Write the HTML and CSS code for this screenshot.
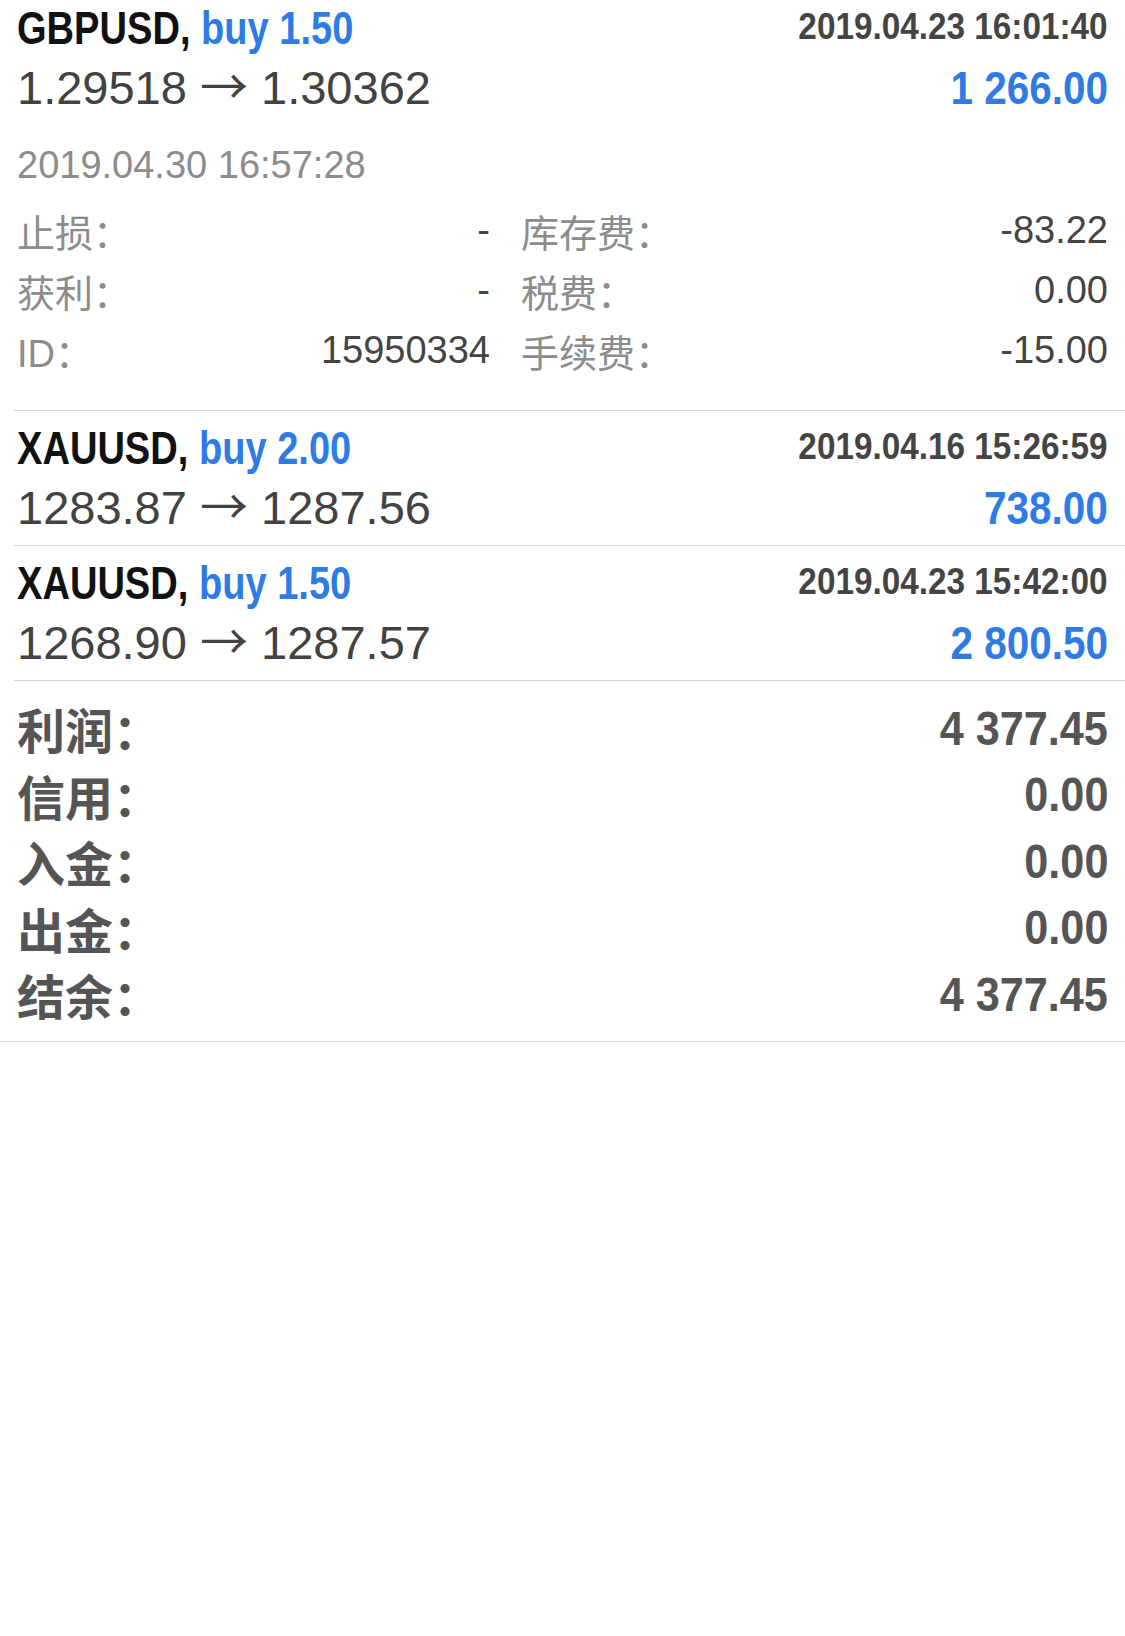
FILE: index.html
```html
<!DOCTYPE html>
<html lang="zh-CN">
<head>
    <meta charset="UTF-8">
    <meta name="viewport" content="width=device-width, initial-scale=1.0">
    <title>历史</title>
    <link rel="stylesheet" href="styles.css">
</head>
<body>

    <!-- 成交列表 -->
    <div class="deals">
        <!-- 展开的订单 -->
        <div class="deal deal-open">
            <div class="deal-line line-title">
                <span class="cond cond-left symbol">GBPUSD, <span class="type">buy 1.50</span></span>
                <span class="cond cond-right time">2019.04.23 16:01:40</span>
            </div>
            <div class="deal-line line-price">
                <span class="prices">1.29518 <span class="arrow">→</span> 1.30362</span>
                <span class="cond cond-right profit">1 266.00</span>
            </div>
            <div class="close-time">2019.04.30 16:57:28</div>
            <div class="detail-grid">
                <div class="detail-cell"><span class="detail-label">止损：</span><span class="detail-value">-</span></div>
                <div class="detail-cell"><span class="detail-label">库存费：</span><span class="detail-value">-83.22</span></div>
                <div class="detail-cell"><span class="detail-label">获利：</span><span class="detail-value">-</span></div>
                <div class="detail-cell"><span class="detail-label">税费：</span><span class="detail-value">0.00</span></div>
                <div class="detail-cell"><span class="detail-label">ID：</span><span class="detail-value">15950334</span></div>
                <div class="detail-cell"><span class="detail-label">手续费：</span><span class="detail-value">-15.00</span></div>
            </div>
        </div>

        <div class="deal">
            <div class="deal-line line-title">
                <span class="cond cond-left symbol">XAUUSD, <span class="type">buy 2.00</span></span>
                <span class="cond cond-right time">2019.04.16 15:26:59</span>
            </div>
            <div class="deal-line line-price">
                <span class="prices">1283.87 <span class="arrow">→</span> 1287.56</span>
                <span class="cond cond-right profit">738.00</span>
            </div>
        </div>

        <div class="deal">
            <div class="deal-line line-title">
                <span class="cond cond-left symbol">XAUUSD, <span class="type">buy 1.50</span></span>
                <span class="cond cond-right time">2019.04.23 15:42:00</span>
            </div>
            <div class="deal-line line-price">
                <span class="prices">1268.90 <span class="arrow">→</span> 1287.57</span>
                <span class="cond cond-right profit">2 800.50</span>
            </div>
        </div>
    </div>

    <!-- 汇总 -->
    <div class="summary">
        <div class="summary-list">
            <div class="summary-row"><span class="summary-label">利润：</span><span class="cond cond-right summary-value">4 377.45</span></div>
            <div class="summary-row"><span class="summary-label">信用：</span><span class="cond cond-right summary-value">0.00</span></div>
            <div class="summary-row"><span class="summary-label">入金：</span><span class="cond cond-right summary-value">0.00</span></div>
            <div class="summary-row"><span class="summary-label">出金：</span><span class="cond cond-right summary-value">0.00</span></div>
            <div class="summary-row"><span class="summary-label">结余：</span><span class="cond cond-right summary-value">4 377.45</span></div>
        </div>
    </div>

</body>
</html>
```

FILE: styles.css
```css
body {
    margin: 0;
    background: #fff;
    font-family: "Liberation Sans", Arial, "Noto Sans CJK SC", sans-serif;
    color: #444;
}

/* list is scrolled a little, first row is cut at the top */
.deals {
    margin-top: -10px;
}

.deal {
    margin-left: 14px;
    padding: 6px 17px 6px 3px;
    border-top: 1px solid #d4d4d4;
}

.deal-open {
    border-top: none;
    padding-top: 7px;
    padding-bottom: 30px;
}

.deal-line {
    display: flex;
    justify-content: space-between;
    align-items: center;
    white-space: nowrap;
}

.line-title {
    height: 60px;
}

.line-price {
    height: 62px;
}

/* narrow bold face of the app, faked by squeezing */
.cond {
    display: inline-block;
    font-weight: bold;
}

.cond-left {
    transform-origin: left center;
}

.cond-right {
    transform-origin: right center;
}

.symbol {
    font-size: 47px;
    color: #111;
    transform: scaleX(.81);
}

.type {
    color: #2f7be6;
}

.time {
    font-size: 37px;
    color: #444;
    transform: scaleX(.9);
}

.prices {
    font-size: 47px;
    line-height: 54px;
    color: #424242;
}

.arrow {
    font-family: "Noto Sans CJK SC", sans-serif;
    font-size: 48px;
    line-height: 0;
}

.profit {
    font-size: 46px;
    color: #2f7be6;
    transform: scaleX(.88);
}

.close-time {
    margin-top: 18px;
    line-height: 56px;
    font-size: 38px;
    color: #8c8c8c;
}

.detail-grid {
    display: grid;
    grid-template-columns: 473px 1fr;
    column-gap: 31px;
    margin-top: 7px;
}

.detail-cell {
    display: flex;
    justify-content: space-between;
    height: 60px;
    align-items: center;
    font-size: 38px;
}

.detail-label {
    color: #8c8c8c;
    font-family: "Liberation Sans", "Noto Sans CJK SC", sans-serif;
}

.detail-value {
    color: #444;
}

/* totals */
.summary {
    border-bottom: 1px solid #d4d4d4;
}

.summary-list {
    margin-left: 14px;
    padding: 14px 17px 13px 3px;
    border-top: 1px solid #d4d4d4;
}

.summary-row {
    display: flex;
    justify-content: space-between;
    align-items: center;
    height: 66.5px;
    color: #555;
}

.summary-label {
    font-size: 48px;
    font-weight: bold;
    font-family: "Liberation Sans", "Noto Sans CJK SC", sans-serif;
}

.summary-value {
    font-size: 48px;
    transform: scaleX(.9);
}
```
